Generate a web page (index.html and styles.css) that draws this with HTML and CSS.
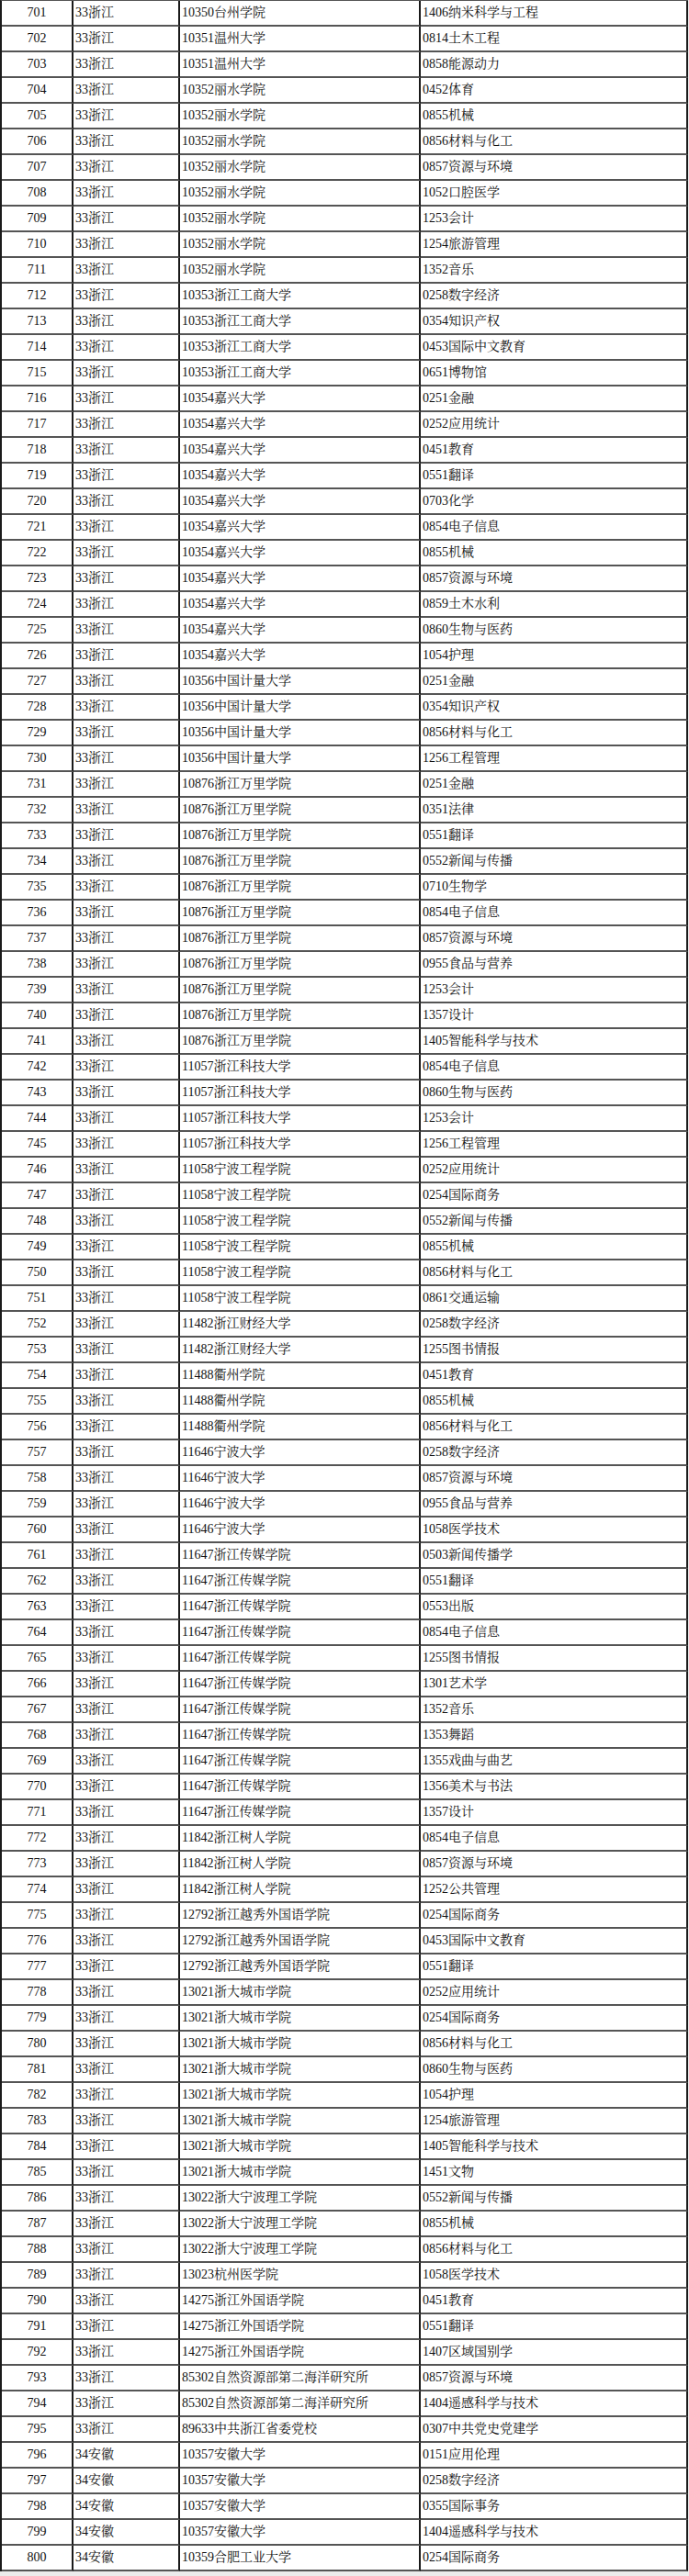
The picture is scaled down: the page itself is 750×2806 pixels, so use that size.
FILE: index.html
```html
<!DOCTYPE html>
<html lang="zh-CN">
<head>
<meta charset="utf-8">
<title>名单</title>
<link rel="stylesheet" href="styles.css">
</head>
<body>
<table class="list">
<colgroup><col class="c-no"><col class="c-prov"><col class="c-school"><col class="c-major"></colgroup>
<tbody>
<tr><td class="no">701</td><td>33浙江</td><td>10350台州学院</td><td>1406纳米科学与工程</td></tr>
<tr><td class="no">702</td><td>33浙江</td><td>10351温州大学</td><td>0814土木工程</td></tr>
<tr><td class="no">703</td><td>33浙江</td><td>10351温州大学</td><td>0858能源动力</td></tr>
<tr><td class="no">704</td><td>33浙江</td><td>10352丽水学院</td><td>0452体育</td></tr>
<tr><td class="no">705</td><td>33浙江</td><td>10352丽水学院</td><td>0855机械</td></tr>
<tr><td class="no">706</td><td>33浙江</td><td>10352丽水学院</td><td>0856材料与化工</td></tr>
<tr><td class="no">707</td><td>33浙江</td><td>10352丽水学院</td><td>0857资源与环境</td></tr>
<tr><td class="no">708</td><td>33浙江</td><td>10352丽水学院</td><td>1052口腔医学</td></tr>
<tr><td class="no">709</td><td>33浙江</td><td>10352丽水学院</td><td>1253会计</td></tr>
<tr><td class="no">710</td><td>33浙江</td><td>10352丽水学院</td><td>1254旅游管理</td></tr>
<tr><td class="no">711</td><td>33浙江</td><td>10352丽水学院</td><td>1352音乐</td></tr>
<tr><td class="no">712</td><td>33浙江</td><td>10353浙江工商大学</td><td>0258数字经济</td></tr>
<tr><td class="no">713</td><td>33浙江</td><td>10353浙江工商大学</td><td>0354知识产权</td></tr>
<tr><td class="no">714</td><td>33浙江</td><td>10353浙江工商大学</td><td>0453国际中文教育</td></tr>
<tr><td class="no">715</td><td>33浙江</td><td>10353浙江工商大学</td><td>0651博物馆</td></tr>
<tr><td class="no">716</td><td>33浙江</td><td>10354嘉兴大学</td><td>0251金融</td></tr>
<tr><td class="no">717</td><td>33浙江</td><td>10354嘉兴大学</td><td>0252应用统计</td></tr>
<tr><td class="no">718</td><td>33浙江</td><td>10354嘉兴大学</td><td>0451教育</td></tr>
<tr><td class="no">719</td><td>33浙江</td><td>10354嘉兴大学</td><td>0551翻译</td></tr>
<tr><td class="no">720</td><td>33浙江</td><td>10354嘉兴大学</td><td>0703化学</td></tr>
<tr><td class="no">721</td><td>33浙江</td><td>10354嘉兴大学</td><td>0854电子信息</td></tr>
<tr><td class="no">722</td><td>33浙江</td><td>10354嘉兴大学</td><td>0855机械</td></tr>
<tr><td class="no">723</td><td>33浙江</td><td>10354嘉兴大学</td><td>0857资源与环境</td></tr>
<tr><td class="no">724</td><td>33浙江</td><td>10354嘉兴大学</td><td>0859土木水利</td></tr>
<tr><td class="no">725</td><td>33浙江</td><td>10354嘉兴大学</td><td>0860生物与医药</td></tr>
<tr><td class="no">726</td><td>33浙江</td><td>10354嘉兴大学</td><td>1054护理</td></tr>
<tr><td class="no">727</td><td>33浙江</td><td>10356中国计量大学</td><td>0251金融</td></tr>
<tr><td class="no">728</td><td>33浙江</td><td>10356中国计量大学</td><td>0354知识产权</td></tr>
<tr><td class="no">729</td><td>33浙江</td><td>10356中国计量大学</td><td>0856材料与化工</td></tr>
<tr><td class="no">730</td><td>33浙江</td><td>10356中国计量大学</td><td>1256工程管理</td></tr>
<tr><td class="no">731</td><td>33浙江</td><td>10876浙江万里学院</td><td>0251金融</td></tr>
<tr><td class="no">732</td><td>33浙江</td><td>10876浙江万里学院</td><td>0351法律</td></tr>
<tr><td class="no">733</td><td>33浙江</td><td>10876浙江万里学院</td><td>0551翻译</td></tr>
<tr><td class="no">734</td><td>33浙江</td><td>10876浙江万里学院</td><td>0552新闻与传播</td></tr>
<tr><td class="no">735</td><td>33浙江</td><td>10876浙江万里学院</td><td>0710生物学</td></tr>
<tr><td class="no">736</td><td>33浙江</td><td>10876浙江万里学院</td><td>0854电子信息</td></tr>
<tr><td class="no">737</td><td>33浙江</td><td>10876浙江万里学院</td><td>0857资源与环境</td></tr>
<tr><td class="no">738</td><td>33浙江</td><td>10876浙江万里学院</td><td>0955食品与营养</td></tr>
<tr><td class="no">739</td><td>33浙江</td><td>10876浙江万里学院</td><td>1253会计</td></tr>
<tr><td class="no">740</td><td>33浙江</td><td>10876浙江万里学院</td><td>1357设计</td></tr>
<tr><td class="no">741</td><td>33浙江</td><td>10876浙江万里学院</td><td>1405智能科学与技术</td></tr>
<tr><td class="no">742</td><td>33浙江</td><td>11057浙江科技大学</td><td>0854电子信息</td></tr>
<tr><td class="no">743</td><td>33浙江</td><td>11057浙江科技大学</td><td>0860生物与医药</td></tr>
<tr><td class="no">744</td><td>33浙江</td><td>11057浙江科技大学</td><td>1253会计</td></tr>
<tr><td class="no">745</td><td>33浙江</td><td>11057浙江科技大学</td><td>1256工程管理</td></tr>
<tr><td class="no">746</td><td>33浙江</td><td>11058宁波工程学院</td><td>0252应用统计</td></tr>
<tr><td class="no">747</td><td>33浙江</td><td>11058宁波工程学院</td><td>0254国际商务</td></tr>
<tr><td class="no">748</td><td>33浙江</td><td>11058宁波工程学院</td><td>0552新闻与传播</td></tr>
<tr><td class="no">749</td><td>33浙江</td><td>11058宁波工程学院</td><td>0855机械</td></tr>
<tr><td class="no">750</td><td>33浙江</td><td>11058宁波工程学院</td><td>0856材料与化工</td></tr>
<tr><td class="no">751</td><td>33浙江</td><td>11058宁波工程学院</td><td>0861交通运输</td></tr>
<tr><td class="no">752</td><td>33浙江</td><td>11482浙江财经大学</td><td>0258数字经济</td></tr>
<tr><td class="no">753</td><td>33浙江</td><td>11482浙江财经大学</td><td>1255图书情报</td></tr>
<tr><td class="no">754</td><td>33浙江</td><td>11488衢州学院</td><td>0451教育</td></tr>
<tr><td class="no">755</td><td>33浙江</td><td>11488衢州学院</td><td>0855机械</td></tr>
<tr><td class="no">756</td><td>33浙江</td><td>11488衢州学院</td><td>0856材料与化工</td></tr>
<tr><td class="no">757</td><td>33浙江</td><td>11646宁波大学</td><td>0258数字经济</td></tr>
<tr><td class="no">758</td><td>33浙江</td><td>11646宁波大学</td><td>0857资源与环境</td></tr>
<tr><td class="no">759</td><td>33浙江</td><td>11646宁波大学</td><td>0955食品与营养</td></tr>
<tr><td class="no">760</td><td>33浙江</td><td>11646宁波大学</td><td>1058医学技术</td></tr>
<tr><td class="no">761</td><td>33浙江</td><td>11647浙江传媒学院</td><td>0503新闻传播学</td></tr>
<tr><td class="no">762</td><td>33浙江</td><td>11647浙江传媒学院</td><td>0551翻译</td></tr>
<tr><td class="no">763</td><td>33浙江</td><td>11647浙江传媒学院</td><td>0553出版</td></tr>
<tr><td class="no">764</td><td>33浙江</td><td>11647浙江传媒学院</td><td>0854电子信息</td></tr>
<tr><td class="no">765</td><td>33浙江</td><td>11647浙江传媒学院</td><td>1255图书情报</td></tr>
<tr><td class="no">766</td><td>33浙江</td><td>11647浙江传媒学院</td><td>1301艺术学</td></tr>
<tr><td class="no">767</td><td>33浙江</td><td>11647浙江传媒学院</td><td>1352音乐</td></tr>
<tr><td class="no">768</td><td>33浙江</td><td>11647浙江传媒学院</td><td>1353舞蹈</td></tr>
<tr><td class="no">769</td><td>33浙江</td><td>11647浙江传媒学院</td><td>1355戏曲与曲艺</td></tr>
<tr><td class="no">770</td><td>33浙江</td><td>11647浙江传媒学院</td><td>1356美术与书法</td></tr>
<tr><td class="no">771</td><td>33浙江</td><td>11647浙江传媒学院</td><td>1357设计</td></tr>
<tr><td class="no">772</td><td>33浙江</td><td>11842浙江树人学院</td><td>0854电子信息</td></tr>
<tr><td class="no">773</td><td>33浙江</td><td>11842浙江树人学院</td><td>0857资源与环境</td></tr>
<tr><td class="no">774</td><td>33浙江</td><td>11842浙江树人学院</td><td>1252公共管理</td></tr>
<tr><td class="no">775</td><td>33浙江</td><td>12792浙江越秀外国语学院</td><td>0254国际商务</td></tr>
<tr><td class="no">776</td><td>33浙江</td><td>12792浙江越秀外国语学院</td><td>0453国际中文教育</td></tr>
<tr><td class="no">777</td><td>33浙江</td><td>12792浙江越秀外国语学院</td><td>0551翻译</td></tr>
<tr><td class="no">778</td><td>33浙江</td><td>13021浙大城市学院</td><td>0252应用统计</td></tr>
<tr><td class="no">779</td><td>33浙江</td><td>13021浙大城市学院</td><td>0254国际商务</td></tr>
<tr><td class="no">780</td><td>33浙江</td><td>13021浙大城市学院</td><td>0856材料与化工</td></tr>
<tr><td class="no">781</td><td>33浙江</td><td>13021浙大城市学院</td><td>0860生物与医药</td></tr>
<tr><td class="no">782</td><td>33浙江</td><td>13021浙大城市学院</td><td>1054护理</td></tr>
<tr><td class="no">783</td><td>33浙江</td><td>13021浙大城市学院</td><td>1254旅游管理</td></tr>
<tr><td class="no">784</td><td>33浙江</td><td>13021浙大城市学院</td><td>1405智能科学与技术</td></tr>
<tr><td class="no">785</td><td>33浙江</td><td>13021浙大城市学院</td><td>1451文物</td></tr>
<tr><td class="no">786</td><td>33浙江</td><td>13022浙大宁波理工学院</td><td>0552新闻与传播</td></tr>
<tr><td class="no">787</td><td>33浙江</td><td>13022浙大宁波理工学院</td><td>0855机械</td></tr>
<tr><td class="no">788</td><td>33浙江</td><td>13022浙大宁波理工学院</td><td>0856材料与化工</td></tr>
<tr><td class="no">789</td><td>33浙江</td><td>13023杭州医学院</td><td>1058医学技术</td></tr>
<tr><td class="no">790</td><td>33浙江</td><td>14275浙江外国语学院</td><td>0451教育</td></tr>
<tr><td class="no">791</td><td>33浙江</td><td>14275浙江外国语学院</td><td>0551翻译</td></tr>
<tr><td class="no">792</td><td>33浙江</td><td>14275浙江外国语学院</td><td>1407区域国别学</td></tr>
<tr><td class="no">793</td><td>33浙江</td><td>85302自然资源部第二海洋研究所</td><td>0857资源与环境</td></tr>
<tr><td class="no">794</td><td>33浙江</td><td>85302自然资源部第二海洋研究所</td><td>1404遥感科学与技术</td></tr>
<tr><td class="no">795</td><td>33浙江</td><td>89633中共浙江省委党校</td><td>0307中共党史党建学</td></tr>
<tr><td class="no">796</td><td>34安徽</td><td>10357安徽大学</td><td>0151应用伦理</td></tr>
<tr><td class="no">797</td><td>34安徽</td><td>10357安徽大学</td><td>0258数字经济</td></tr>
<tr><td class="no">798</td><td>34安徽</td><td>10357安徽大学</td><td>0355国际事务</td></tr>
<tr><td class="no">799</td><td>34安徽</td><td>10357安徽大学</td><td>1404遥感科学与技术</td></tr>
<tr><td class="no">800</td><td>34安徽</td><td>10359合肥工业大学</td><td>0254国际商务</td></tr>
</tbody>
</table>
</body>
</html>
```

FILE: styles.css
```css
html {
  background: #ececec;
}
body {
  margin: 0;
  background: #ececec;
}
.list {
  table-layout: fixed;
  width: 749px;
  border-collapse: separate;
  border-spacing: 0;
  background: #fff;
  border-left: 2px solid #1a1a1a;
  border-top: 1px solid #555;
  font-family: "Liberation Serif", "Noto Serif CJK SC", "Noto Sans CJK SC", serif;
  font-size: 14px;
  color: #111;
}
.c-no { width: 78px; }
.c-prov { width: 116px; }
.c-school { width: 262px; }
.c-major { width: 291px; }
.list td {
  box-sizing: border-box;
  height: 28px;
  padding: 0 0 0 2px;
  border-right: 2px solid #1a1a1a;
  border-bottom: 2px solid #555;
  white-space: nowrap;
  overflow: hidden;
  vertical-align: middle;
  line-height: 20px;
  text-align: left;
}
.list td.no {
  text-align: center;
  padding: 0;
}
```
